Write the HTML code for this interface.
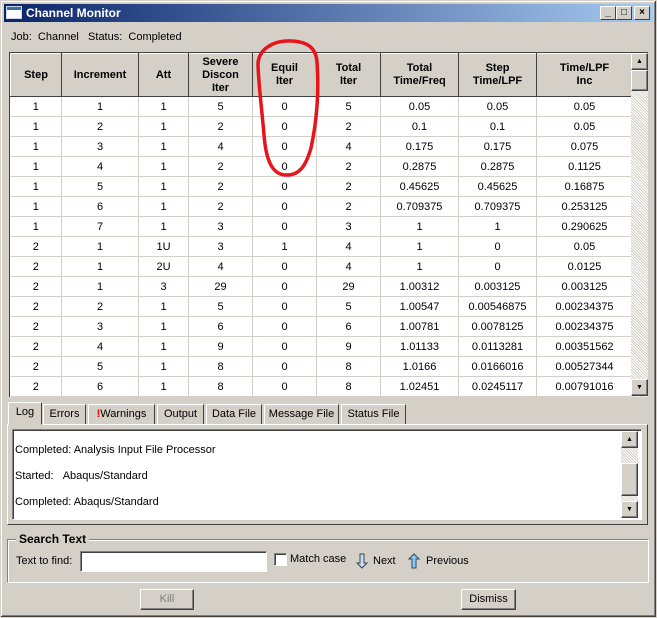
<!DOCTYPE html>
<html><head><style>
*{box-sizing:border-box;margin:0;padding:0}
body{width:657px;height:618px;background:#d4d0c8;font-family:"Liberation Sans",sans-serif;font-size:11px;color:#000;position:relative;overflow:hidden}
.a{position:absolute}
.win{left:0;top:0;width:657px;height:618px;border:1px solid #d4d0c8;box-shadow:inset -1px -1px #404040,inset 1px 1px #fff,inset -2px -2px #808080}
.title{left:4px;top:4px;width:649px;height:18px;background:linear-gradient(90deg,#0a246a,#a6caf0);color:#fff;font-weight:bold;font-size:12px;line-height:18px;padding-left:22px}
.tb{width:16px;height:14px;top:6px;background:#d4d0c8;border:1px solid;border-color:#fff #404040 #404040 #fff;font-size:10px;font-weight:bold;text-align:center;line-height:11px;color:#000}
table{border-collapse:collapse;table-layout:fixed}
.grid{left:9px;top:52px;border:1px solid #404040;border-right:none;border-bottom:none;background:#fff;width:623px;height:345px;overflow:hidden}
.grid td{height:20px;text-align:center;border-right:1px solid #d4d0c8;border-bottom:1px solid #d4d0c8;padding:0;white-space:nowrap}
.grid th{height:43px;background:#d4d0c8;font-weight:bold;border:1px solid;border-color:#fff #404040 #404040 #fff;line-height:13px;padding:0}
.sb{background:#e8e6e0;background-image:repeating-linear-gradient(45deg,#fff 0 1px,#d4d0c8 1px 2px)}
.btn{background:#d4d0c8;border:1px solid;border-color:#fff #404040 #404040 #fff;box-shadow:inset -1px -1px #808080;text-align:center}
.tab{top:404px;height:20px;border:1px solid;border-color:#fff #404040 transparent #fff;border-bottom:none;line-height:19px;text-align:center;background:#d4d0c8}
</style></head><body>
<div class="a win"></div>
<div class="a title">Channel Monitor</div>
<div class="a" style="left:7px;top:7px;width:14px;height:11px;background:#fff;border-top:3px solid #3a6ea5;outline:1px solid #cfd8e8"></div>
<div class="a tb" style="left:600px">_</div>
<div class="a tb" style="left:616px">□</div>
<div class="a tb" style="left:634px">×</div>
<div class="a" style="left:11px;top:31px">Job:&nbsp;&nbsp;Channel&nbsp;&nbsp;&nbsp;Status:&nbsp;&nbsp;Completed</div>

<div class="a grid">
<table style="width:622px">
<colgroup><col style="width:51px"><col style="width:77px"><col style="width:50px"><col style="width:64px"><col style="width:64px"><col style="width:64px"><col style="width:78px"><col style="width:78px"><col style="width:96px"></colgroup>
<tr><th>Step</th><th>Increment</th><th>Att</th><th>Severe<br>Discon<br>Iter</th><th>Equil<br>Iter</th><th>Total<br>Iter</th><th>Total<br>Time/Freq</th><th>Step<br>Time/LPF</th><th>Time/LPF<br>Inc</th></tr>
<tr><td>1</td><td>1</td><td>1</td><td>5</td><td>0</td><td>5</td><td>0.05</td><td>0.05</td><td>0.05</td></tr>
<tr><td>1</td><td>2</td><td>1</td><td>2</td><td>0</td><td>2</td><td>0.1</td><td>0.1</td><td>0.05</td></tr>
<tr><td>1</td><td>3</td><td>1</td><td>4</td><td>0</td><td>4</td><td>0.175</td><td>0.175</td><td>0.075</td></tr>
<tr><td>1</td><td>4</td><td>1</td><td>2</td><td>0</td><td>2</td><td>0.2875</td><td>0.2875</td><td>0.1125</td></tr>
<tr><td>1</td><td>5</td><td>1</td><td>2</td><td>0</td><td>2</td><td>0.45625</td><td>0.45625</td><td>0.16875</td></tr>
<tr><td>1</td><td>6</td><td>1</td><td>2</td><td>0</td><td>2</td><td>0.709375</td><td>0.709375</td><td>0.253125</td></tr>
<tr><td>1</td><td>7</td><td>1</td><td>3</td><td>0</td><td>3</td><td>1</td><td>1</td><td>0.290625</td></tr>
<tr><td>2</td><td>1</td><td>1U</td><td>3</td><td>1</td><td>4</td><td>1</td><td>0</td><td>0.05</td></tr>
<tr><td>2</td><td>1</td><td>2U</td><td>4</td><td>0</td><td>4</td><td>1</td><td>0</td><td>0.0125</td></tr>
<tr><td>2</td><td>1</td><td>3</td><td>29</td><td>0</td><td>29</td><td>1.00312</td><td>0.003125</td><td>0.003125</td></tr>
<tr><td>2</td><td>2</td><td>1</td><td>5</td><td>0</td><td>5</td><td>1.00547</td><td>0.00546875</td><td>0.00234375</td></tr>
<tr><td>2</td><td>3</td><td>1</td><td>6</td><td>0</td><td>6</td><td>1.00781</td><td>0.0078125</td><td>0.00234375</td></tr>
<tr><td>2</td><td>4</td><td>1</td><td>9</td><td>0</td><td>9</td><td>1.01133</td><td>0.0113281</td><td>0.00351562</td></tr>
<tr><td>2</td><td>5</td><td>1</td><td>8</td><td>0</td><td>8</td><td>1.0166</td><td>0.0166016</td><td>0.00527344</td></tr>
<tr><td>2</td><td>6</td><td>1</td><td>8</td><td>0</td><td>8</td><td>1.02451</td><td>0.0245117</td><td>0.00791016</td></tr>
</table></div>
<div class="a sb" style="left:631px;top:52px;width:17px;height:345px;border-top:1px solid #404040"></div>
<div class="a btn" style="left:631px;top:53px;width:17px;height:17px;font-size:7px;line-height:15px">▲</div>
<div class="a btn" style="left:631px;top:70px;width:17px;height:21px"></div>
<div class="a btn" style="left:631px;top:379px;width:17px;height:17px;font-size:7px;line-height:15px">▼</div>

<div class="a tab" style="left:8px;width:34px;top:402px;height:23px;z-index:2;border-bottom:1px solid #d4d0c8">Log</div>
<div class="a tab" style="left:43px;width:43px">Errors</div>
<div class="a tab" style="left:88px;width:67px"><span style="color:#e00;font-weight:bold">!</span>Warnings</div>
<div class="a tab" style="left:157px;width:47px">Output</div>
<div class="a tab" style="left:206px;width:56px">Data File</div>
<div class="a tab" style="left:264px;width:75px">Message File</div>
<div class="a tab" style="left:341px;width:65px">Status File</div>
<div class="a" style="left:7px;top:424px;width:641px;height:101px;border:1px solid;border-color:#fff #404040 #404040 #fff"></div>
<div class="a" style="left:12px;top:429px;width:630px;height:91px;background:#fff;border:1px solid;border-color:#808080 #fff #fff #808080;box-shadow:inset 1px 1px #404040"></div>
<div class="a" style="left:15px;top:437px;line-height:26px">Completed: Analysis Input File Processor<br>Started:&nbsp;&nbsp;&nbsp;Abaqus/Standard<br>Completed: Abaqus/Standard</div>
<div class="a sb" style="left:621px;top:431px;width:17px;height:87px"></div>
<div class="a btn" style="left:621px;top:431px;width:17px;height:17px;font-size:7px;line-height:15px">▲</div>
<div class="a btn" style="left:621px;top:463px;width:17px;height:33px"></div>
<div class="a btn" style="left:621px;top:501px;width:17px;height:17px;font-size:7px;line-height:15px">▼</div>

<div class="a" style="left:7px;top:539px;width:642px;height:44px;border:1px solid;border-color:#808080 #fff #fff #808080;box-shadow:inset 1px 1px #fff,1px 1px #808080 inset"></div>
<div class="a" style="left:16px;top:532px;padding:0 3px;background:#d4d0c8;font-weight:bold;font-size:12px">Search Text</div>
<div class="a" style="left:16px;top:555px">Text to find:</div>
<div class="a" style="left:80px;top:551px;width:187px;height:21px;background:#fff;border:1px solid;border-color:#808080 #fff #fff #808080;box-shadow:inset 1px 1px #404040"></div>
<div class="a" style="left:274px;top:553px;width:13px;height:13px;background:#fff;border:1px solid;border-color:#808080 #fff #fff #808080;box-shadow:inset 1px 1px #404040"></div>
<div class="a" style="left:290px;top:553px">Match case</div>
<svg class="a" style="left:355px;top:553px" width="14" height="16"><path d="M5 1h4v9h3l-5 5-5-5h3z" fill="#cde" stroke="#345"/></svg>
<div class="a" style="left:373px;top:555px">Next</div>
<svg class="a" style="left:407px;top:553px" width="14" height="16"><path d="M5 15h4V6h3L7 1 2 6h3z" fill="#8cf" stroke="#345"/></svg>
<div class="a" style="left:426px;top:555px">Previous</div>

<div class="a btn" style="left:140px;top:589px;width:54px;height:21px;line-height:19px;color:#808080">Kill</div>
<div class="a btn" style="left:461px;top:589px;width:55px;height:21px;line-height:19px">Dismiss</div>

<svg class="a" style="left:0;top:0" width="657" height="618"><path d="M292 41 C275 40 258 48 258 65 C259 90 262 110 264 135 C266 160 272 174 285 175 C300 176 306 165 311 148 C317 120 319 90 317 62 C316 48 308 42 292 41 Z" fill="none" stroke="#e8141c" stroke-width="3.5"/></svg>
</body></html>
